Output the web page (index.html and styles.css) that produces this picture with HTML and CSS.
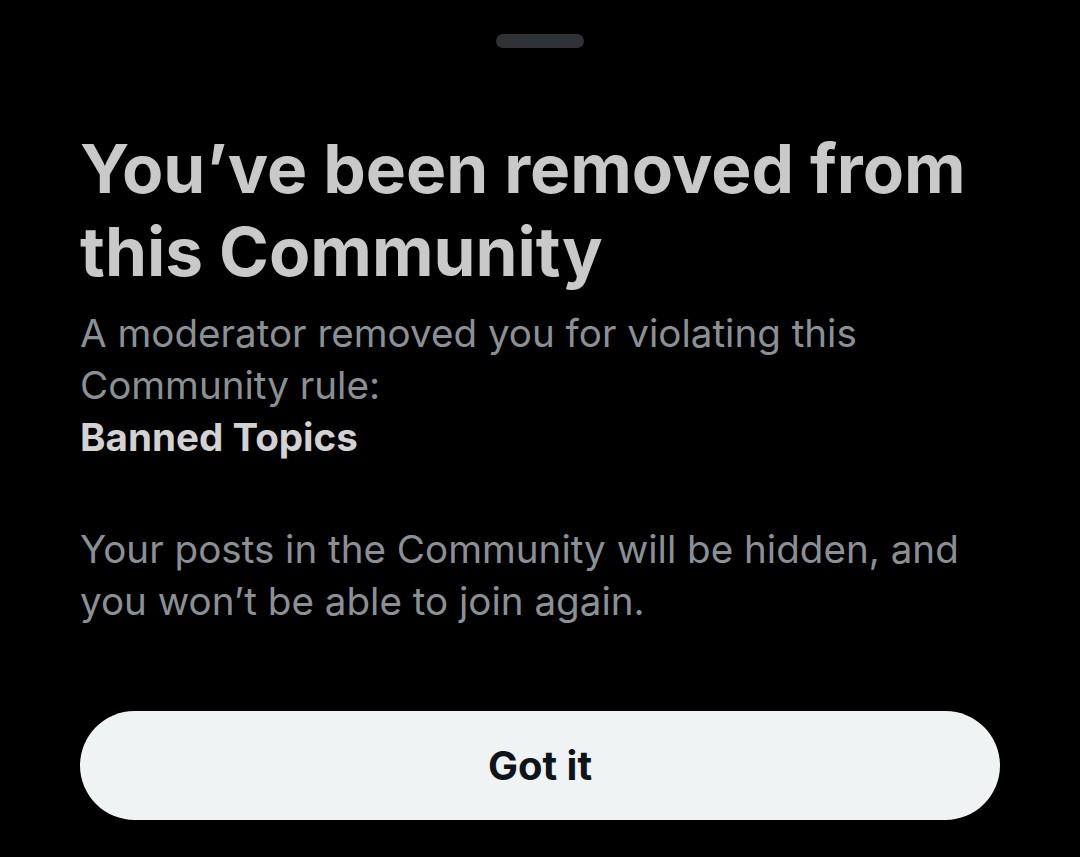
FILE: index.html
```html
<!DOCTYPE html>
<html lang="en">
<head>
<meta charset="utf-8">
<link rel="stylesheet" href="styles.css">
</head>
<body>
<div class="sheet">
  <div class="handle-row"><div class="handle"></div></div>
  <h1 class="title">You’ve been removed from this Community</h1>
  <p class="text">A moderator removed you for violating this Community rule:<br><strong class="rule">Banned Topics</strong></p>
  <p class="text second">Your posts in the Community will be hidden, and you won’t be able to join again.</p>
  <button class="btn">Got it</button>
</div>
</body>
</html>
```

FILE: styles.css
```css
html, body {
  margin: 0;
  padding: 0;
  background: #000;
  height: 100%;
}
.sheet {
  box-sizing: border-box;
  width: 1080px;
  height: 857px;
  padding: 34px 80px 0 80px;
  display: flex;
  flex-direction: column;
  font-family: Inter, "Noto Sans", sans-serif;
}
.handle-row {
  display: flex;
  justify-content: center;
}
.handle {
  width: 88px;
  height: 14px;
  border-radius: 7px;
  background: #2f3336;
}
.title {
  margin: 79px 0 0 0;
  font-size: 67.5px;
  line-height: 83px;
  font-weight: 700;
  color: #c9c9c9;
}
.text {
  margin: 14px 0 0 0;
  font-size: 38.6px;
  line-height: 52px;
  color: #8b9095;
  font-weight: 400;
}
.rule {
  color: #d2d2d2;
  font-weight: 700;
}
.second {
  margin-top: 60px;
}
.btn {
  margin-top: 84px;
  height: 109px;
  width: 920px;
  border: none;
  border-radius: 55px;
  background: #eff3f4;
  color: #0f1419;
  font-family: Inter, "Noto Sans", sans-serif;
  font-size: 40px;
  font-weight: 700;
  padding: 0;
}
```
